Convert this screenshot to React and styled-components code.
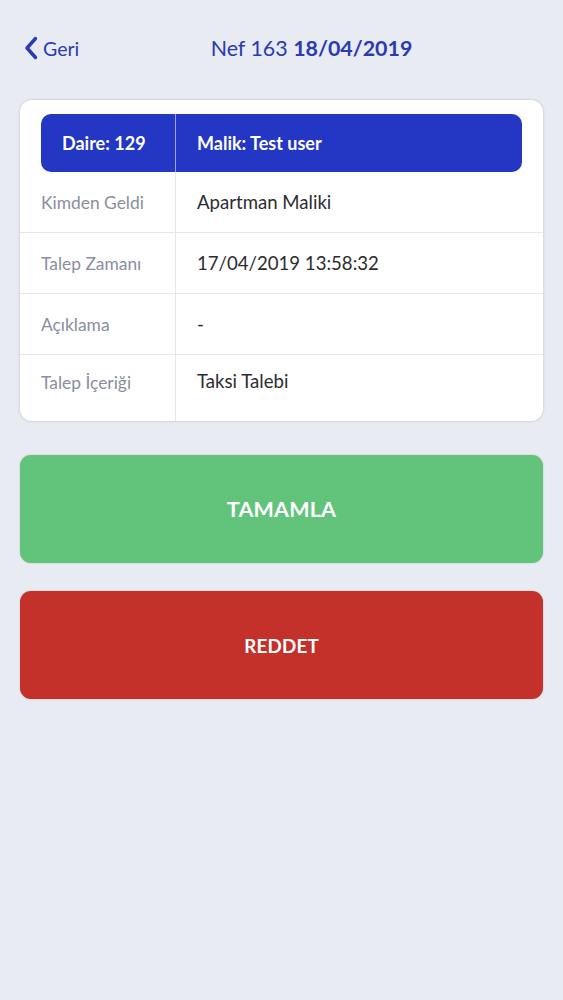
import React from "react";
import styled, { createGlobalStyle } from "styled-components";

const Global = createGlobalStyle`
  html, body { margin: 0; padding: 0; background: #e8ebf2; }
  body { font-family: Lato, "Open Sans", "Liberation Sans", sans-serif; }
  #root { min-height: 1000px; }
`;

const Page = styled.div`
  min-height: 1000px;
  background: #e8ebf2;
  padding: 0 20px;
  box-sizing: border-box;
`;

const Header = styled.header`
  height: 100px;
  display: flex;
  align-items: center;
  padding-bottom: 4px;
  box-sizing: border-box;
`;

const Back = styled.button`
  display: flex;
  align-items: center;
  gap: 5px;
  background: none;
  border: 0;
  padding: 0 0 0 4px;
  width: 60px;
  color: #2a3ab8;
  font-family: inherit;
  font-size: 19.5px;
  cursor: pointer;
`;

const Title = styled.h1`
  flex: 1;
  margin: 0;
  text-align: center;
  font-size: 21.4px;
  font-weight: 400;
  color: #2a3ab0;
  b { font-weight: 700; }
`;

const Card = styled.div`
  background: #fff;
  border-radius: 12px;
  box-shadow: 0 0 3px rgba(0, 0, 0, 0.18);
  padding-top: 14px;
  overflow: hidden;
`;

const HeadBar = styled.div`
  margin: 0 21px;
  height: 58px;
  background: #2336c4;
  border-radius: 10px;
  display: grid;
  grid-template-columns: 135px 1fr;
  color: #fff;
  font-size: 18px;
  font-weight: 700;
`;

const HeadCell = styled.div`
  display: flex;
  align-items: center;
  padding-left: 21px;
  border-right: ${(p) => (p.$first ? "1px solid rgba(255,255,255,0.55)" : "none")};
`;

const Row = styled.div`
  display: grid;
  grid-template-columns: 156px 1fr;
  height: ${(p) => (p.$last ? "66px" : "60px")};
  border-top: ${(p) => (p.$first ? "none" : "1px solid #e6e7ec")};
`;

const Label = styled.div`
  display: flex;
  align-items: ${(p) => (p.$last ? "flex-start" : "center")};
  padding: ${(p) => (p.$last ? "17px 0 0 21px" : "0 0 0 21px")};
  border-right: 1px solid #e6e7ec;
  color: #8a8e9f;
  font-size: 17.4px;
`;

const Value = styled.div`
  display: flex;
  align-items: ${(p) => (p.$last ? "flex-start" : "center")};
  padding: ${(p) => (p.$last ? "15px 0 0 21px" : "0 0 0 21px")};
  color: #2c2c30;
  font-size: 18.6px;
`;

const Action = styled.button`
  display: flex;
  width: 100%;
  height: 108px;
  margin-top: ${(p) => p.$mt}px;
  align-items: center;
  justify-content: center;
  border: 0;
  border-radius: 11px;
  background: ${(p) => p.$bg};
  box-shadow: 0 0 2px rgba(0, 0, 0, 0.2);
  color: #fff;
  font-family: inherit;
  font-weight: 700;
  font-size: ${(p) => p.$fs}px;
  letter-spacing: 0.2px;
  cursor: pointer;
`;

const rows = [
  ["Kimden Geldi", "Apartman Maliki"],
  ["Talep Zamanı", "17/04/2019 13:58:32"],
  ["Açıklama", "-"],
  ["Talep İçeriği", "Taksi Talebi"],
];

export default function App() {
  return (
    <>
      <Global />
      <Page>
        <Header>
          <Back>
            <svg width="14" height="24" viewBox="0 0 14 24" fill="none">
              <path d="M11.5 2.5 L3 12 L11.5 21.5" stroke="#2a3ab8" strokeWidth="3.4" strokeLinecap="round" strokeLinejoin="round" />
            </svg>
            Geri
          </Back>
          <Title>
            Nef 163 <b>18/04/2019</b>
          </Title>
        </Header>
        <Card>
          <HeadBar>
            <HeadCell $first>Daire: 129</HeadCell>
            <HeadCell>Malik: Test user</HeadCell>
          </HeadBar>
          {rows.map(([l, v], i) => (
            <Row key={l} $first={i === 0} $last={i === rows.length - 1}>
              <Label $last={i === rows.length - 1}>{l}</Label>
              <Value $last={i === rows.length - 1}>{v}</Value>
            </Row>
          ))}
        </Card>
        <Action $mt={34} $bg="#62c37a" $fs={21.5}>TAMAMLA</Action>
        <Action $mt={28} $bg="#c3312a" $fs={18.8}>REDDET</Action>
      </Page>
    </>
  );
}
